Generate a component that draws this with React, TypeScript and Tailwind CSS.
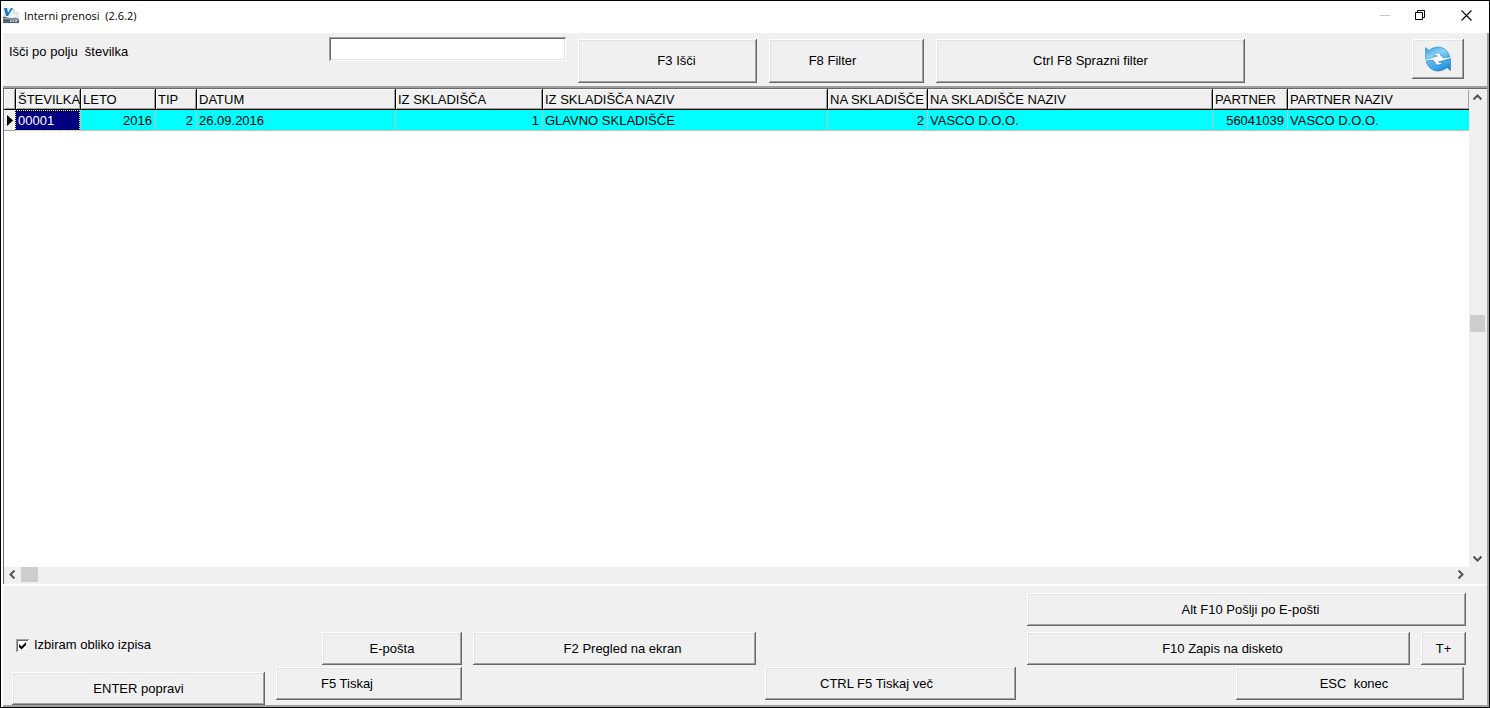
import React, { useState } from 'react';
import { clsx } from 'clsx';

interface BevelButtonProps {
  children: React.ReactNode;
  className?: string;
  label?: string;
}

interface Column {
  title: string;
  width: string;
  value: string;
  numeric?: boolean;
}

// The last column takes whatever width is left
const columns: Column[] = [
  { title: 'ŠTEVILKA', width: 'w-[65px]', value: '00001' },
  { title: 'LETO', width: 'w-[75px]', value: '2016', numeric: true },
  { title: 'TIP', width: 'w-[41px]', value: '2', numeric: true },
  { title: 'DATUM', width: 'w-[199px]', value: '26.09.2016' },
  { title: 'IZ SKLADIŠČA', width: 'w-[147px]', value: '1', numeric: true },
  { title: 'IZ SKLADIŠČA NAZIV', width: 'w-[285px]', value: 'GLAVNO SKLADIŠČE' },
  { title: 'NA SKLADIŠČE', width: 'w-[100px]', value: '2', numeric: true },
  { title: 'NA SKLADIŠČE NAZIV', width: 'w-[285px]', value: 'VASCO D.O.O.' },
  { title: 'PARTNER', width: 'w-[75px]', value: '56041039', numeric: true },
  { title: 'PARTNER NAZIV', width: 'w-auto', value: 'VASCO D.O.O.' },
];

function BevelButton({ children, className, label }: BevelButtonProps) {
  return (
    <button
      type="button"
      aria-label={label}
      className={clsx(
        'flex shrink-0 items-center justify-center whitespace-pre bg-[#f0f0f0] shadow-[inset_-1px_-1px_#696969,inset_1px_1px_#ffffff,inset_-2px_-2px_#a0a0a0,inset_2px_2px_#e3e3e3]',
        className
      )}
    >
      {children}
    </button>
  );
}

function AppLogo() {
  return (
    <svg viewBox="0 0 16 16" className="size-4" aria-hidden="true">
      <path d="M1 1h10l4 4v10H1z" fill="#eef2f5" stroke="#c3cbd1" strokeWidth=".6" />
      <path d="M11 1v4h4" fill="#fff" stroke="#aab4bb" strokeWidth=".6" />
      <path d="M0 9c3-1 5 1 8 1s5-1 8 1v4H0z" fill="#54636d" />
      <path d="M0 11c4-2 6 1 16 0" stroke="#b5c1c9" fill="none" />
      <path d="M1 0h3l1 5L8 0h2L5 8H3z" fill="#1377bd" />
      <path d="M7 13h1.500M9.500 13h1.500M12 13h2" stroke="#dfe6ea" strokeWidth="1.500" />
    </svg>
  );
}

function RefreshIcon() {
  return (
    <svg viewBox="0 0 26 26" className="size-[26px]" aria-hidden="true">
      <defs>
        <linearGradient id="blueTop" x1="0" y1="0" x2="1" y2="1">
          <stop offset="0" stopColor="#2b93dc" />
          <stop offset=".5" stopColor="#8ad4fa" />
          <stop offset="1" stopColor="#3c9fe3" />
        </linearGradient>
        <linearGradient id="blueBottom" x1="0" y1="0" x2="1" y2="1">
          <stop offset="0" stopColor="#6cc5f5" />
          <stop offset=".6" stopColor="#3ba4e8" />
          <stop offset="1" stopColor="#1571c0" />
        </linearGradient>
      </defs>
      <path d="M1 13L10 7L17 8L25 12.500L17 18L9 19L1 15z" fill="#fff" />
      <path
        d="M.5 1.500L4 4.500C10-1 20 0 23.500 7.500L25 11L18 12L17.500 10L16 10L15.500 7.500C13 6.500 10.500 7 8.500 9L12.500 10L.5 13.500z"
        fill="url(#blueTop)"
        stroke="#2f8ed2"
        strokeWidth=".6"
      />
      <path
        d="M25.500 24.500L22 21.500C16 27 6 26 2.500 18.500L1 15L8 14L8.500 16L10 16L10.500 18.500C13 19.500 15.500 19 17.500 17L13.500 16L25.500 12.500z"
        fill="url(#blueBottom)"
        stroke="#1c75be"
        strokeWidth=".6"
      />
    </svg>
  );
}

function Chevron({ points }: { points: string }) {
  return (
    <svg viewBox="0 0 9 9" className="size-[9px]" aria-hidden="true">
      <polyline points={points} fill="none" stroke="#555" strokeWidth="2" />
    </svg>
  );
}

function TitleBar() {
  return (
    <header className="flex h-8 shrink-0 items-center bg-white pb-[3px] pl-0.5">
      <AppLogo />
      <h1 className="ml-[5px] flex-1 whitespace-pre font-['Open_Sans',sans-serif] text-[11px] leading-4">
        Interni prenosi  (2.6.2)
      </h1>
      <div className="flex pr-[17px]">
        <button type="button" aria-label="Pomanjšaj" className="px-3">
          <svg viewBox="0 0 11 11" className="size-[11px]">
            <path d="M0 5.500h10" stroke="#c8c8c8" />
          </svg>
        </button>
        <button type="button" aria-label="Obnovi" className="px-3">
          <svg viewBox="0 0 11 11" className="size-[11px]">
            <path d="M.5 2.500h7v7h-7zM2.500 2.500v-2h7v7h-2" fill="none" stroke="#000" />
          </svg>
        </button>
        <button type="button" aria-label="Zapri" className="pl-[23px]">
          <svg viewBox="0 0 11 11" className="size-[11px]">
            <path d="M.5.5l10 10M10.500.5l-10 10" fill="none" stroke="#000" strokeWidth="1.100" />
          </svg>
        </button>
      </div>
    </header>
  );
}

function Toolbar() {
  const [query, setQuery] = useState('');

  return (
    <div className="flex h-[53px] shrink-0 items-start pt-1 pl-[6px] pr-[23px]">
      <label htmlFor="search" className="mt-[7px] w-[320px] whitespace-pre leading-4">
        Išči po polju  številka
      </label>
      <input
        id="search"
        value={query}
        onChange={(e) => setQuery(e.target.value)}
        className="h-6 w-[237px] bg-white px-1 outline-none shadow-[inset_1px_1px_#a0a0a0,inset_-1px_-1px_#ffffff,inset_2px_2px_#696969,inset_-2px_-2px_#e3e3e3]"
      />
      <div className="mt-0.5 ml-3 flex flex-1 gap-3">
        <BevelButton className="h-11 w-[179px] pl-[18px]">F3 Išči</BevelButton>
        <BevelButton className="h-11 w-[155px] pr-7">F8 Filter</BevelButton>
        <BevelButton className="h-11 w-[309px]">Ctrl F8 Sprazni filter</BevelButton>
        <BevelButton label="Osveži" className="ml-auto h-10 w-[52px]">
          <RefreshIcon />
        </BevelButton>
      </div>
    </div>
  );
}

function DataTable() {
  return (
    <table className="w-full table-fixed border-separate border-spacing-0">
      <colgroup>
        <col className="w-[11px]" />
        {columns.map((col) => (
          <col key={col.title} className={col.width} />
        ))}
      </colgroup>
      <thead>
        <tr className="h-[21px]">
          <th
            className="border-b border-black bg-[#f0f0f0] p-0 shadow-[inset_1px_1px_#ffffff,inset_-1px_-1px_#a0a0a0]"
            aria-label="Izbor"
          />
          {columns.map((col) => (
            <th
              key={col.title}
              className="overflow-hidden whitespace-nowrap border-b border-l border-black bg-[#f0f0f0] p-0 pt-0.5 pl-0.5 text-left font-normal leading-[18px] shadow-[inset_1px_1px_#ffffff,inset_-1px_-1px_#a0a0a0]"
            >
              {col.title}
            </th>
          ))}
        </tr>
      </thead>
      <tbody>
        <tr className="h-[21px]">
          <td className="border-b border-[#a0a0a0] bg-[#f0f0f0] p-0">
            <svg viewBox="0 0 6 11" className="ml-[3px] h-[11px] w-1.5" aria-hidden="true">
              <path d="M0 0l6 5.500L0 11z" />
            </svg>
          </td>
          {columns.map((col, i) => (
            <td
              key={col.title}
              className={clsx(
                'overflow-hidden whitespace-nowrap border-b border-l border-[#c0c0c0] p-0 pt-0.5 pr-[3px] pl-0.5 leading-[18px]',
                col.numeric && 'text-right',
                i === 0
                  ? 'border-l-black bg-[#000080] text-white outline-1 -outline-offset-1 outline-dotted outline-[#ffff7f]'
                  : 'bg-[#00ffff]'
              )}
            >
              {col.value}
            </td>
          ))}
        </tr>
      </tbody>
    </table>
  );
}

function DataGrid() {
  return (
    <section className="flex min-h-0 flex-1 flex-col border-t-2 border-[#a0a0a0] bg-[#f0f0f0]">
      <div className="flex min-h-0 flex-1 border-t border-l border-[#696969]">
        <div className="min-w-0 flex-1 bg-white">
          <DataTable />
        </div>
        <div className="flex w-[18px] shrink-0 flex-col pr-0.5 pl-px">
          <button type="button" aria-label="Gor" className="flex h-[17px] items-center justify-center">
            <Chevron points="0.500,6.500 4.500,2.500 8.500,6.500" />
          </button>
          <div className="grow-21" />
          <div className="h-[17px] bg-[#cdcdcd]" />
          <div className="grow-22" />
          <button type="button" aria-label="Dol" className="flex h-[17px] items-center justify-center">
            <Chevron points="0.500,2.500 4.500,6.500 8.500,2.500" />
          </button>
        </div>
      </div>
      <div className="flex h-[17px] shrink-0 border-l border-[#696969] pr-[18px] pb-0.5">
        <button type="button" aria-label="Levo" className="flex w-[17px] items-center justify-center">
          <Chevron points="6.500,0.500 2.500,4.500 6.500,8.500" />
        </button>
        <div className="w-[17px] bg-[#cdcdcd]" />
        <div className="flex-1" />
        <button type="button" aria-label="Desno" className="flex w-[17px] items-center justify-center">
          <Chevron points="2.500,0.500 6.500,4.500 2.500,8.500" />
        </button>
      </div>
    </section>
  );
}

function ActionPanel() {
  const [chooseForm, setChooseForm] = useState(true);

  return (
    <footer className="flex shrink-0 border-t-2 border-white pt-[7px] pl-[9px]">
      <div className="flex w-[253px] shrink-0 flex-col justify-between pt-11">
        <label className="flex items-center gap-[5px] pl-1 leading-4">
          <span className="relative size-[13px]">
            <input
              type="checkbox"
              checked={chooseForm}
              onChange={() => setChooseForm(!chooseForm)}
              className="peer block size-[13px] appearance-none bg-white shadow-[inset_1px_1px_#a0a0a0,inset_-1px_-1px_#ffffff,inset_2px_2px_#696969,inset_-2px_-2px_#e3e3e3]"
            />
            <svg
              viewBox="0 0 13 13"
              className="pointer-events-none absolute inset-0 hidden size-[13px] peer-checked:block"
              aria-hidden="true"
            >
              <path d="M3 5l2.500 2.500L10 3v3L5.500 10.500L3 8z" />
            </svg>
          </span>
          Izbiram obliko izpisa
        </label>
        <BevelButton className="h-[33px]">ENTER popravi</BevelButton>
      </div>

      <div className="ml-[11px] flex min-w-0 flex-1 flex-col pb-[5px]">
        <div className="flex justify-end pr-[21px]">
          <BevelButton className="h-[33px] w-[439px] pl-2">Alt F10 Pošlji po E-pošti</BevelButton>
        </div>
        <div className="mt-[6px] flex gap-[11px] pr-[21px] pl-[46px]">
          <BevelButton className="h-[33px] w-[140px]">E-pošta</BevelButton>
          <BevelButton className="h-[33px] w-[283px] pl-4">F2 Pregled na ekran</BevelButton>
          <BevelButton className="ml-auto h-[33px] w-[383px] pl-2">F10 Zapis na disketo</BevelButton>
          <BevelButton className="h-[33px] w-[45px]">T+</BevelButton>
        </div>
        <div className="mt-0.5 flex pr-[23px]">
          <BevelButton className="h-[33px] w-[186px] pr-11">F5 Tiskaj</BevelButton>
          <BevelButton className="ml-[303px] h-[33px] w-[251px] pr-7">CTRL F5 Tiskaj več</BevelButton>
          <BevelButton className="ml-auto h-[33px] w-[228px] pl-2">ESC  konec</BevelButton>
        </div>
      </div>
    </footer>
  );
}

export default function App() {
  return (
    <main className="flex h-screen flex-col border border-black bg-white font-['Liberation_Sans',Arial,sans-serif] text-[13px] text-black">
      <TitleBar />
      <div className="ml-0.5 flex min-h-0 flex-1 flex-col border-r-2 border-b-2 border-[#a0a0a0] bg-[#f0f0f0]">
        <Toolbar />
        <DataGrid />
        <ActionPanel />
      </div>
    </main>
  );
}
